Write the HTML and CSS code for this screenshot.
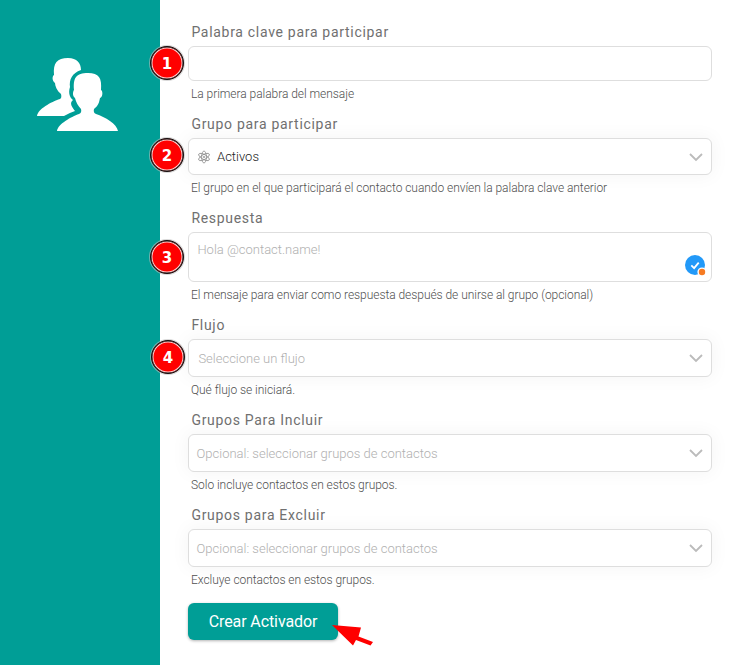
FILE: index.html
```html
<!DOCTYPE html>
<html lang="es">
<head>
<meta charset="utf-8">
<title>Crear Activador</title>
<link rel="stylesheet" href="styles.css">
</head>
<body>
<div class="page">
  <aside class="sidebar">
    <svg class="people" width="82" height="74" viewBox="0 0 82 74">
      <path d="M0 58C1 51 14 44 23 41Q25 40 24 36C20 33 18 28 18 25C15 23 15 18 17 17C16 5 20 0 31 0C40 0 44 5 44 12C35 15 32 22 33 29C31 35 33 40 36 42C32 45 35 49 38 53Q32 55 27 58Z"/>
      <path d="M20 73C21 66 34 59 42 56Q45 55 44 51C41 48 39 44 38 40C35 38 36 33 37 32C36 20 39 15 51 15C62 15 65 20 64 32C66 33 66 39 63 40C62 45 61 48 57 51Q56 55 59 56C68 59 80 66 81 73Z"/>
    </svg>
  </aside>
  <form class="form">
    <div class="field">
      <label class="label">Palabra clave para participar</label>
      <div class="box text"><span class="step">1</span></div>
      <p class="help">La primera palabra del mensaje</p>
    </div>
    <div class="field">
      <label class="label">Grupo para participar</label>
      <div class="box select short"><span class="step">2</span>
        <svg class="atom" width="14" height="14" viewBox="0 0 14 14"><g><ellipse cx="7" cy="7" rx="2.4" ry="6"/><ellipse cx="7" cy="7" rx="2.4" ry="6" transform="rotate(60 7 7)"/><ellipse cx="7" cy="7" rx="2.4" ry="6" transform="rotate(120 7 7)"/><circle cx="7" cy="7" r=".7"/></g></svg>
        <span class="value">Activos</span>
        <svg class="chevron" width="14" height="9" viewBox="0 0 14 9"><path d="M1 1l6 6 6-6"/></svg>
      </div>
      <p class="help">El grupo en el que participará el contacto cuando envíen la palabra clave anterior</p>
    </div>
    <div class="field">
      <label class="label">Respuesta</label>
      <div class="box area"><span class="step mid">3</span>
        <span class="placeholder message">Hola @contact.name!</span>
        <svg class="check" width="22" height="22" viewBox="0 0 22 22"><circle cx="10" cy="10" r="10" fill="#2299f8"/><path d="M6.3 10.4l2.8 2.7 4.6-5.4" fill="none" stroke="#fff" stroke-width="1.8"/><circle cx="17" cy="17" r="4.6" fill="#fff"/><circle cx="17" cy="17" r="3.2" fill="#f67b22"/></svg>
      </div>
      <p class="help">El mensaje para enviar como respuesta después de unirse al grupo (opcional)</p>
    </div>
    <div class="field">
      <label class="label">Flujo</label>
      <div class="box select"><span class="step last">4</span>
        <span class="placeholder flow">Seleccione un flujo</span>
        <svg class="chevron" width="14" height="9" viewBox="0 0 14 9"><path d="M1 1l6 6 6-6"/></svg>
      </div>
      <p class="help">Qué flujo se iniciará.</p>
    </div>
    <div class="field">
      <label class="label">Grupos Para Incluir</label>
      <div class="box select">
        <span class="placeholder groups">Opcional: seleccionar grupos de contactos</span>
        <svg class="chevron" width="14" height="9" viewBox="0 0 14 9"><path d="M1 1l6 6 6-6"/></svg>
      </div>
      <p class="help">Solo incluye contactos en estos grupos.</p>
    </div>
    <div class="field">
      <label class="label">Grupos para Excluir</label>
      <div class="box select">
        <span class="placeholder groups">Opcional: seleccionar grupos de contactos</span>
        <svg class="chevron" width="14" height="9" viewBox="0 0 14 9"><path d="M1 1l6 6 6-6"/></svg>
      </div>
      <p class="help">Excluye contactos en estos grupos.</p>
    </div>
    <div class="actions">
      <button type="button" class="submit">Crear Activador</button>
      <svg class="pointer" width="42" height="22" viewBox="0 0 42 22"><path d="M0 0L29 2.5L26.5 11.5L41 17L38.5 20.5L24 15L21 20.5Z"/></svg>
    </div>
  </form>
</div>
</body>
</html>
```

FILE: styles.css
```css
* { box-sizing: border-box; }
body { margin: 0; background: #fff; font-family: Roboto, "Liberation Sans", sans-serif; color: #707070; }
.page { display: flex; height: 665px; overflow: hidden; }
.sidebar { width: 160px; flex: none; background: #009e96; padding: 58px 0 0 37px; }
.people { display: block; fill: #fff; }
.form { flex: 1; padding: 22px 22px 0 28px; }
.field { margin-bottom: 11px; }
.label { display: block; height: 24px; padding-left: 3.4px; font-size: 14px; line-height: 20px; letter-spacing: .7px; white-space: nowrap; }
.box { position: relative; display: flex; align-items: center; height: 38px; border: 1px solid #dedede; border-radius: 6px; background: #fff; padding: 0 8.5px 0 8px; }
.text { height: 35px; }
.select { box-shadow: 0 0 18px 2px rgba(0, 0, 0, .04); }
.short { height: 37px; }
.area { height: 50px; align-items: flex-start; }
.help { margin: 4px 0 0; padding-left: 3px; font-size: 12px; font-weight: 300; line-height: 18px; letter-spacing: -.05px; white-space: nowrap; color: #505050; }
.value, .placeholder { font-size: 13px; line-height: 18px; font-weight: 300; white-space: nowrap; }
.value { margin-left: 6px; color: #222; }
.placeholder { color: #b0b0b0; }
.message { margin-top: 8px; margin-left: .4px; }
.flow { margin: 1px 0 0 1.4px; }
.groups { margin-top: 1px; margin-left: -.5px; }
.atom { margin-top: 1px; fill: none; stroke: #8c8c8c; stroke-width: .8; }
.chevron { margin: 1px 0 0 auto; fill: none; stroke: #bbb; stroke-width: 1.8; }
.check { position: absolute; right: 4px; bottom: 4px; }
.step { position: absolute; left: -39px; top: -1px; width: 34px; height: 34px; border: 1px solid #111; border-radius: 50%; background: #f00; box-shadow: inset 0 0 0 .5px #111, inset 0 0 0 1.5px #ffd0d0, 0 0 0 1px rgba(190, 190, 190, .6); color: #fff; font: bold 15px/34px "DejaVu Sans", sans-serif; text-align: center; }
.mid { top: 7px; }
.last { left: -38px; top: 0; }
.actions { display: flex; align-items: flex-start; padding-top: 3px; }
.submit { width: 150px; height: 37px; border: 0; border-radius: 6px; padding: 0; background: #009e96; color: #fff; font: 16px/37px Roboto, sans-serif; letter-spacing: -.1px; box-shadow: 0 1px 3px rgba(0, 0, 0, .3); }
.pointer { position: relative; left: -6px; top: 22px; fill: #f00; }
```
